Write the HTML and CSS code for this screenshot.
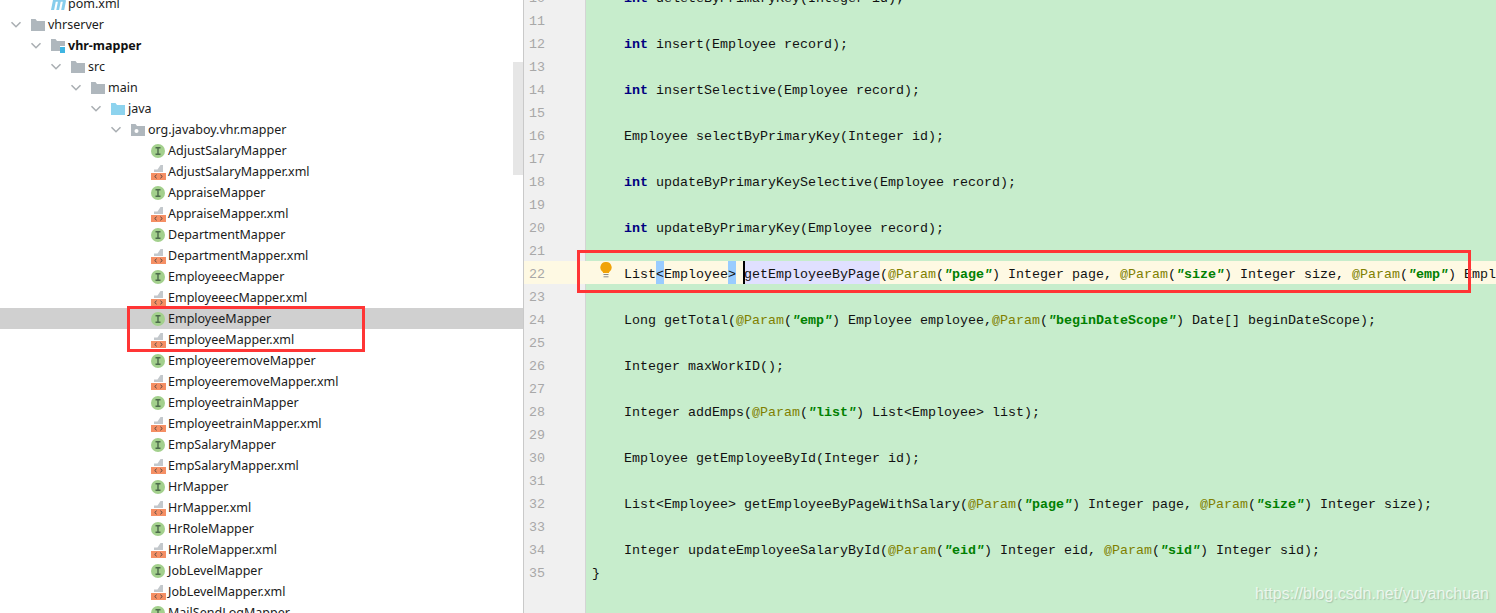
FILE: index.html
```html
<!DOCTYPE html>
<html lang="en">
<head>
<meta charset="utf-8">
<title>vhr-mapper</title>
<link rel="stylesheet" href="styles.css">
</head>
<body>
<svg class="sprites" width="0" height="0" aria-hidden="true">
  <symbol id="chev" viewBox="0 0 16 12"><path d="M3.5 3.2 8 7.8l4.500-4.600" fill="none" stroke="#a9aeb2" stroke-width="1.5"/></symbol>
  <symbol id="folder" viewBox="0 0 14 12"><path d="M0 0h4.500l1.500 2h8v10H0z" fill="#afb7bd"/></symbol>
  <symbol id="folder-java" viewBox="0 0 14 12"><path d="M0 0h4.500l1.500 2h8v10H0z" fill="#8dd3ee"/></symbol>
  <symbol id="folder-pkg" viewBox="0 0 14 12"><path d="M0 0h4.500l1.500 2h8v10H0z" fill="#afb7bd"/><circle cx="5.500" cy="7" r="2" fill="#fff"/></symbol>
  <symbol id="folder-mod" viewBox="0 0 14 14"><path d="M0 0h4.500l1.500 2h8v5H9v5H0z" fill="#afb7bd"/><rect x="9" y="8" width="6" height="6" fill="#3fb5e2"/></symbol>
  <symbol id="iface" viewBox="0 0 14 14"><circle cx="7" cy="7" r="7" fill="#a3d08d"/><path d="M4.500 3.700h5M4.500 10.300h5M7 3.700v6.600" fill="none" stroke="#4c6a4a" stroke-width="1.4"/></symbol>
  <symbol id="xml" viewBox="0 0 15 15"><path d="M3 7V4.500h3.500L9.500 0H12v7z" fill="#c3c8cc"/><rect y="8" width="15" height="7" fill="#f58f64"/><path d="M5.700 9.700 3.700 11.500l2 1.800M9.300 9.700l2 1.800-2 1.800" fill="none" stroke="#5c4a42" stroke-width="1"/></symbol>
  <symbol id="maven" viewBox="0 0 15 12"><path d="M0 12 2.200 1h10.300c1.900 0 2.700 1.100 2.300 3L13.200 12h-3l1.600-8.300H9.700L8.100 12H5.300l1.600-8.300H4.800L3.100 12z" fill="#87cdec"/></symbol>
  <symbol id="bulb" viewBox="0 0 12 16"><path d="M6 0a5.500 5.500 0 0 1 3 10.200V11H3v-.8A5.500 5.500 0 0 1 6 0z" fill="#f0a30a"/><path d="M3.500 12.500h5M3.500 14.800h5" stroke="#8a8a8a" stroke-width="1"/></symbol>
</svg>

<main class="ide">
  <nav class="tree">
    <div class="row lv1"><span class="chev"></span><svg class="ic wide"><use href="#maven"/></svg><span>pom.xml</span></div>
    <div class="row lv0"><svg class="chev"><use href="#chev"/></svg><svg class="ic"><use href="#folder"/></svg><span>vhrserver</span></div>
    <div class="row lv1"><svg class="chev"><use href="#chev"/></svg><svg class="ic tall"><use href="#folder-mod"/></svg><b>vhr-mapper</b></div>
    <div class="row lv2"><svg class="chev"><use href="#chev"/></svg><svg class="ic"><use href="#folder"/></svg><span>src</span></div>
    <div class="row lv3"><svg class="chev"><use href="#chev"/></svg><svg class="ic"><use href="#folder"/></svg><span>main</span></div>
    <div class="row lv4"><svg class="chev"><use href="#chev"/></svg><svg class="ic"><use href="#folder-java"/></svg><span>java</span></div>
    <div class="row lv5"><svg class="chev"><use href="#chev"/></svg><svg class="ic"><use href="#folder-pkg"/></svg><span>org.javaboy.vhr.mapper</span></div>
    <div class="row lv6"><span class="chev"></span><svg class="ic tall"><use href="#iface"/></svg><span>AdjustSalaryMapper</span></div>
    <div class="row lv6"><span class="chev"></span><svg class="ic file"><use href="#xml"/></svg><span>AdjustSalaryMapper.xml</span></div>
    <div class="row lv6"><span class="chev"></span><svg class="ic tall"><use href="#iface"/></svg><span>AppraiseMapper</span></div>
    <div class="row lv6"><span class="chev"></span><svg class="ic file"><use href="#xml"/></svg><span>AppraiseMapper.xml</span></div>
    <div class="row lv6"><span class="chev"></span><svg class="ic tall"><use href="#iface"/></svg><span>DepartmentMapper</span></div>
    <div class="row lv6"><span class="chev"></span><svg class="ic file"><use href="#xml"/></svg><span>DepartmentMapper.xml</span></div>
    <div class="row lv6"><span class="chev"></span><svg class="ic tall"><use href="#iface"/></svg><span>EmployeeecMapper</span></div>
    <div class="row lv6"><span class="chev"></span><svg class="ic file"><use href="#xml"/></svg><span>EmployeeecMapper.xml</span></div>
    <div class="row lv6 selected"><span class="chev"></span><svg class="ic tall"><use href="#iface"/></svg><span>EmployeeMapper</span></div>
    <div class="row lv6"><span class="chev"></span><svg class="ic file"><use href="#xml"/></svg><span>EmployeeMapper.xml</span></div>
    <div class="row lv6"><span class="chev"></span><svg class="ic tall"><use href="#iface"/></svg><span>EmployeeremoveMapper</span></div>
    <div class="row lv6"><span class="chev"></span><svg class="ic file"><use href="#xml"/></svg><span>EmployeeremoveMapper.xml</span></div>
    <div class="row lv6"><span class="chev"></span><svg class="ic tall"><use href="#iface"/></svg><span>EmployeetrainMapper</span></div>
    <div class="row lv6"><span class="chev"></span><svg class="ic file"><use href="#xml"/></svg><span>EmployeetrainMapper.xml</span></div>
    <div class="row lv6"><span class="chev"></span><svg class="ic tall"><use href="#iface"/></svg><span>EmpSalaryMapper</span></div>
    <div class="row lv6"><span class="chev"></span><svg class="ic file"><use href="#xml"/></svg><span>EmpSalaryMapper.xml</span></div>
    <div class="row lv6"><span class="chev"></span><svg class="ic tall"><use href="#iface"/></svg><span>HrMapper</span></div>
    <div class="row lv6"><span class="chev"></span><svg class="ic file"><use href="#xml"/></svg><span>HrMapper.xml</span></div>
    <div class="row lv6"><span class="chev"></span><svg class="ic tall"><use href="#iface"/></svg><span>HrRoleMapper</span></div>
    <div class="row lv6"><span class="chev"></span><svg class="ic file"><use href="#xml"/></svg><span>HrRoleMapper.xml</span></div>
    <div class="row lv6"><span class="chev"></span><svg class="ic tall"><use href="#iface"/></svg><span>JobLevelMapper</span></div>
    <div class="row lv6"><span class="chev"></span><svg class="ic file"><use href="#xml"/></svg><span>JobLevelMapper.xml</span></div>
    <div class="row lv6"><span class="chev"></span><svg class="ic tall"><use href="#iface"/></svg><span>MailSendLogMapper</span></div>
    <div class="thumb"></div>
  </nav>

  <section class="editor">
    <div class="ln"><span class="no">10</span><code class="src">    <i class="kw">int</i> deleteByPrimaryKey(Integer id);</code></div>
    <div class="ln"><span class="no">11</span><code class="src"></code></div>
    <div class="ln"><span class="no">12</span><code class="src">    <i class="kw">int</i> insert(Employee record);</code></div>
    <div class="ln"><span class="no">13</span><code class="src"></code></div>
    <div class="ln"><span class="no">14</span><code class="src">    <i class="kw">int</i> insertSelective(Employee record);</code></div>
    <div class="ln"><span class="no">15</span><code class="src"></code></div>
    <div class="ln"><span class="no">16</span><code class="src">    Employee selectByPrimaryKey(Integer id);</code></div>
    <div class="ln"><span class="no">17</span><code class="src"></code></div>
    <div class="ln"><span class="no">18</span><code class="src">    <i class="kw">int</i> updateByPrimaryKeySelective(Employee record);</code></div>
    <div class="ln"><span class="no">19</span><code class="src"></code></div>
    <div class="ln"><span class="no">20</span><code class="src">    <i class="kw">int</i> updateByPrimaryKey(Employee record);</code></div>
    <div class="ln"><span class="no">21</span><code class="src"></code></div>
    <div class="ln current"><span class="no">22</span><code class="src">    List<mark class="brace">&lt;</mark>Employee<mark class="brace">&gt;</mark> <mark class="usage">getEmployeeByPage</mark>(<i class="an">@Param</i>(<i class="st"><u>"</u>page<u>"</u></i>) Integer page, <i class="an">@Param</i>(<i class="st"><u>"</u>size<u>"</u></i>) Integer size, <i class="an">@Param</i>(<i class="st"><u>"</u>emp<u>"</u></i>) Employee employee);<svg class="bulb"><use href="#bulb"/></svg><span class="caret"></span></code></div>
    <div class="ln"><span class="no">23</span><code class="src"></code></div>
    <div class="ln"><span class="no">24</span><code class="src">    Long getTotal(<i class="an">@Param</i>(<i class="st"><u>"</u>emp<u>"</u></i>) Employee employee,<i class="an">@Param</i>(<i class="st"><u>"</u>beginDateScope<u>"</u></i>) Date[] beginDateScope);</code></div>
    <div class="ln"><span class="no">25</span><code class="src"></code></div>
    <div class="ln"><span class="no">26</span><code class="src">    Integer maxWorkID();</code></div>
    <div class="ln"><span class="no">27</span><code class="src"></code></div>
    <div class="ln"><span class="no">28</span><code class="src">    Integer addEmps(<i class="an">@Param</i>(<i class="st"><u>"</u>list<u>"</u></i>) List&lt;Employee&gt; list);</code></div>
    <div class="ln"><span class="no">29</span><code class="src"></code></div>
    <div class="ln"><span class="no">30</span><code class="src">    Employee getEmployeeById(Integer id);</code></div>
    <div class="ln"><span class="no">31</span><code class="src"></code></div>
    <div class="ln"><span class="no">32</span><code class="src">    List&lt;Employee&gt; getEmployeeByPageWithSalary(<i class="an">@Param</i>(<i class="st"><u>"</u>page<u>"</u></i>) Integer page, <i class="an">@Param</i>(<i class="st"><u>"</u>size<u>"</u></i>) Integer size);</code></div>
    <div class="ln"><span class="no">33</span><code class="src"></code></div>
    <div class="ln"><span class="no">34</span><code class="src">    Integer updateEmployeeSalaryById(<i class="an">@Param</i>(<i class="st"><u>"</u>eid<u>"</u></i>) Integer eid, <i class="an">@Param</i>(<i class="st"><u>"</u>sid<u>"</u></i>) Integer sid);</code></div>
    <div class="ln"><span class="no">35</span><code class="src">}</code></div>
    <div class="ln fill"><span class="no"></span><code class="src"></code></div>
  </section>

  <div class="callout callout-tree"></div>
  <div class="callout callout-code"></div>
  <div class="watermark">https://blog.csdn.net/yuyanchuan</div>
</main>
</body>
</html>
```

FILE: styles.css
```css
* { box-sizing: border-box; }
html, body { margin: 0; height: 100%; overflow: hidden; background: #fff; }
.sprites { display: block; height: 0; }

.ide { position: relative; display: flex; height: 613px; overflow: hidden; }

/* Project tree */
.tree {
  position: relative;
  flex: 0 0 524px;
  height: 613px;
  overflow: hidden;
  border-right: 1px solid #c9c9c9;
  font: 12.5px/21px "Noto Sans", sans-serif;
  color: #1b1b1b;
}
.row {
  display: flex;
  align-items: center;
  height: 21px;
  white-space: nowrap;
}
.row:first-child { margin-top: -7px; }
.row b { font-weight: 700; color: #111; }
.lv0 { padding-left: 8px; }
.lv1 { padding-left: 28px; }
.lv2 { padding-left: 48px; }
.lv3 { padding-left: 68px; }
.lv4 { padding-left: 88px; }
.lv5 { padding-left: 108px; }
.lv6 { padding-left: 128px; }
.selected { background: #d0d0d0; }
.chev { flex: 0 0 16px; width: 16px; height: 12px; margin-right: 7px; }
.ic { flex: 0 0 14px; width: 14px; height: 12px; margin-right: 3px; overflow: visible; }
.ic.tall { height: 14px; }
.ic.wide { flex-basis: 15px; width: 15px; margin-right: 2px; }
.ic.file { flex-basis: 15px; width: 15px; height: 15px; margin: 2px 2px 0 0; }
.thumb {
  position: absolute;
  top: 62px;
  right: 0;
  width: 10px;
  height: 113px;
  background: #e6e6e6;
}

/* Editor */
.editor {
  flex: 1;
  min-width: 0;
  height: 613px;
  display: flex;
  flex-direction: column;
  overflow: hidden;
  background: #c7edcc;
}
.ln {
  display: flex;
  flex: 0 0 23px;
  height: 23px;
}
.ln:first-child { margin-top: -15px; }
.ln.fill { flex: 1 0 auto; }
.no {
  flex: 0 0 62px;
  padding-left: 5px;
  background: #f0f0f0;
  border-right: 1px solid #d4d4d4;
  font: 13.33px/27px "Liberation Mono", monospace;
  color: #a8a8a8;
}
.src {
  position: relative;
  flex: 1;
  min-width: 0;
  padding-left: 6px;
  white-space: pre;
  overflow: hidden;
  font: 13.33px/27px "Liberation Mono", monospace;
  color: #111;
}
.current .no { background: #fef9e3; border-right-color: #fef9e3; }
.current .src { background: #fef9e3; }
.kw { font-style: normal; font-weight: 700; color: #000080; }
.an { font-style: normal; color: #808000; }
.st { font-style: normal; font-weight: 700; color: #008000; }
.st u { font-style: italic; text-decoration: none; }
mark { color: inherit; display: inline-block; height: 23px; line-height: 27px; }
.brace { background: #99ccff; }
.usage { background: #e0e0ff; }
.bulb { position: absolute; left: 14px; top: 1px; width: 12px; height: 16px; }
.caret { position: absolute; left: 157px; top: 0; width: 2px; height: 23px; background: #000; }

/* Annotations over the screenshot */
.callout { position: absolute; border: 3px solid #ff3535; pointer-events: none; }
.callout-tree { left: 127px; top: 306px; width: 238px; height: 46px; }
.callout-code { left: 577px; top: 250px; width: 894px; height: 43px; }
.watermark {
  position: absolute;
  left: 1255px;
  top: 584px;
  font: 16px/20px "Liberation Sans", sans-serif;
  color: rgba(255, 255, 255, .72);
  text-shadow: 1px 1px 1px rgba(110, 130, 115, .35);
  white-space: nowrap;
}
```
